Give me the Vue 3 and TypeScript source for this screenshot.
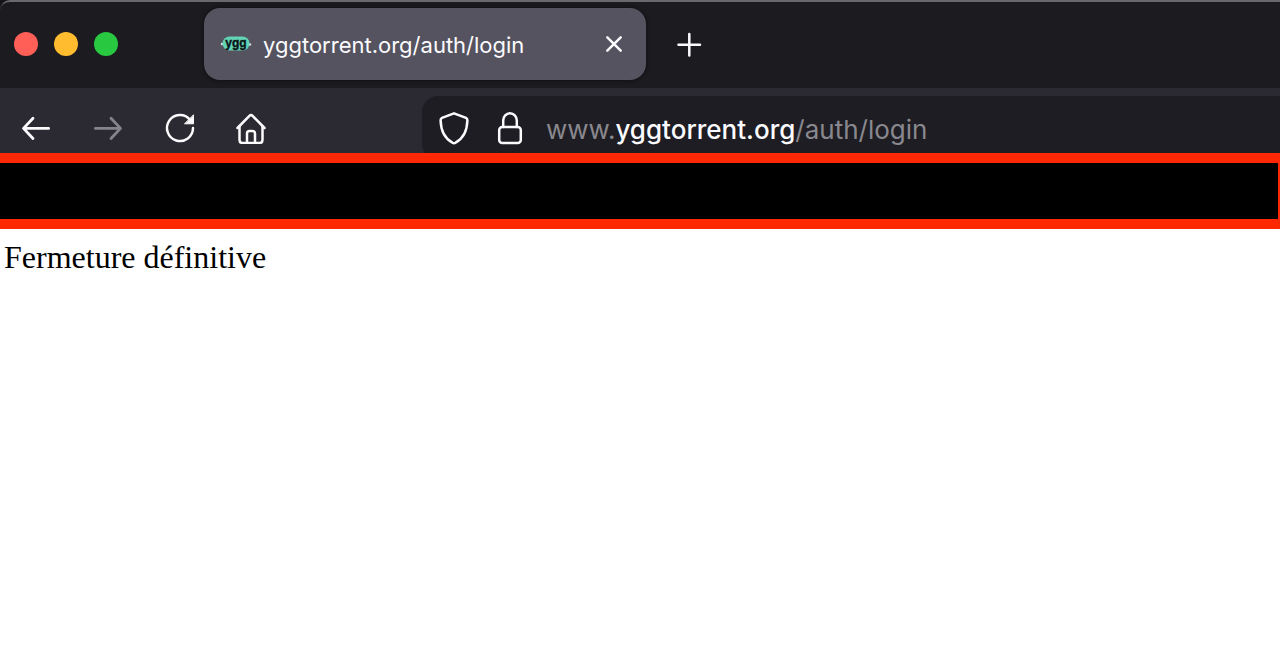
<script setup lang="ts">
import { computed, ref } from 'vue'

const tabTitle = 'yggtorrent.org/auth/login'
const address = ref('www.yggtorrent.org/auth/login')
const editing = ref(false)

const parts = computed(() => {
  const match = address.value.match(/^(www\.)?([^/]*)(.*)$/)
  return { prefix: match?.[1] ?? '', host: match?.[2] ?? '', path: match?.[3] ?? '' }
})
</script>

<template>
  <div class="window">
    <header class="titlebar">
      <div class="lights">
        <button class="light red" aria-label="Fermer la fenêtre"></button>
        <button class="light yellow" aria-label="Réduire"></button>
        <button class="light green" aria-label="Agrandir"></button>
      </div>
      <div class="tab">
        <svg class="favicon" viewBox="0 0 32 20" aria-hidden="true">
          <circle cx="2" cy="10" r="1.2" fill="#d5e2e4" />
          <circle cx="30" cy="10.5" r="1.2" fill="#d5e2e4" />
          <rect x="2.5" y="2.5" width="27" height="14" rx="7" fill="#62d3b6" />
          <text x="16" y="12.5" text-anchor="middle">ygg</text>
        </svg>
        <button class="tab-title">{{ tabTitle }}</button>
        <button class="tab-close" aria-label="Fermer l’onglet">
          <svg width="20" height="20" viewBox="0 0 20 20">
            <path d="M3.300 3.300l13.400 13.400M16.700 3.300L3.300 16.700" />
          </svg>
        </button>
      </div>
      <button class="new-tab" aria-label="Nouvel onglet">
        <svg width="26" height="26" viewBox="0 0 26 26">
          <path d="M13.300 3v21.500M2.500 13.700h21.500" />
        </svg>
      </button>
    </header>

    <nav class="toolbar">
      <div class="actions">
        <button class="action" aria-label="Page précédente">
          <svg class="arrow" width="32" height="32" viewBox="0 0 32 32">
            <path d="M28.600 16.400H3.600M13 6.300L3.500 16.400 13 26.500" />
          </svg>
        </button>
        <button class="action" aria-label="Page suivante" disabled>
          <svg class="arrow" width="32" height="32" viewBox="0 0 32 32">
            <path d="M3.400 16.400h25M19 6.300l9.500 10.100L19 26.500" />
          </svg>
        </button>
        <button class="action" aria-label="Actualiser">
          <svg width="32" height="32" viewBox="0 0 32 32">
            <path d="M29 16A13 13 0 1 1 26 7.700" />
            <path class="solid" d="M29.500 3.200v8.600h-8.600z" />
          </svg>
        </button>
        <button class="action" aria-label="Accueil">
          <svg width="32" height="32" viewBox="0 0 32 32">
            <path d="M1.500 16L13.400 3.900q1.600-1.600 3.200 0L28.500 16" />
            <path d="M3.500 14.500V28q0 3 3 3h17q3 0 3-3V14.500" />
            <path d="M11 31V21.500q0-2.500 2.500-2.500h3q2.500 0 2.500 2.500V31" />
          </svg>
        </button>
      </div>
      <div class="urlbar">
        <button class="info" aria-label="Protection contre le pistage">
          <svg width="32" height="36" viewBox="0 0 32 36">
            <path d="M16 3.300l12 4.600q1.500.7 1.400 2.600C29.100 20 26 28 17.600 32.700q-1.600 1-3.200 0C6 28 2.900 20 2.600 10.500q-.1-1.900 1.400-2.600z" />
          </svg>
        </button>
        <button class="info" aria-label="Informations du site">
          <svg width="32" height="36" viewBox="0 0 32 36">
            <rect x="5.200" y="17" width="21.600" height="16" rx="3" />
            <path d="M9.200 17v-6.500a6.800 7.300 0 0 1 13.600 0V17" />
          </svg>
        </button>
        <div class="address" :class="{ editing }">
          <span class="formatted" aria-hidden="true"><span>{{ parts.prefix }}</span><span class="host">{{ parts.host }}</span><span>{{ parts.path }}</span></span>
          <input
            v-model="address"
            type="text"
            aria-label="Adresse"
            spellcheck="false"
            @focus="editing = true"
            @blur="editing = false"
          />
        </div>
      </div>
    </nav>

    <div class="banner"></div>

    <main class="page">
      <p>Fermeture définitive</p>
    </main>
  </div>
</template>

<style>
body {
  background: #fff;
}
</style>

<style scoped>
* {
  box-sizing: border-box;
}

.window {
  display: flex;
  flex-direction: column;
  min-height: 100vh;
  background: #131318;
  font-family: Inter, "Liberation Sans", sans-serif;
}

button {
  display: flex;
  align-items: center;
  justify-content: center;
  flex: none;
  padding: 0;
  border: 0;
  background: none;
  color: #fbfbfe;
  font: inherit;
}

svg {
  display: block;
  flex: none;
}

button svg {
  fill: none;
  stroke: currentColor;
  stroke-width: 2.5;
  stroke-linecap: round;
  stroke-linejoin: round;
}

button .arrow {
  stroke-width: 2.8;
}

.solid {
  fill: currentColor;
  stroke-width: 1;
}

.titlebar {
  display: flex;
  align-items: center;
  height: 88px;
  padding: 0 0 2px 14px;
  border-top: 2px solid #68686d;
  border-top-left-radius: 10px;
  background: #1c1b20;
}

.lights {
  display: flex;
  gap: 16px;
  margin-right: 86px;
}

.light {
  width: 24px;
  height: 24px;
  border-radius: 50%;
}

.red {
  background: #ff5f57;
}

.yellow {
  background: #febc2e;
}

.green {
  background: #28c840;
}

.tab {
  display: flex;
  align-items: center;
  width: 442px;
  height: 72px;
  padding: 0 16px;
  border-radius: 16px;
  background: #55535f;
  box-shadow: 0 0 4px #0c0c0f;
}

.favicon {
  width: 32px;
  height: 20px;
  margin-right: 11px;
}

.favicon text {
  fill: #0a1518;
  font-family: "Liberation Sans", sans-serif;
  font-size: 12px;
  font-weight: 700;
  stroke: #0a1518;
  stroke-width: 0.4;
}

.tab-title {
  flex: 1;
  justify-content: flex-start;
  padding-top: 2px;
  font-size: 22px;
  line-height: 32px;
}

.tab-close {
  width: 32px;
  height: 32px;
}

.new-tab {
  width: 40px;
  height: 40px;
  margin-left: 23px;
}

.toolbar {
  display: flex;
  align-items: flex-start;
  height: 65px;
  padding-top: 8px;
  overflow: hidden;
  background: #2b2a33;
}

.actions {
  display: flex;
  gap: 32px;
  padding-left: 16px;
  margin-right: 150px;
}

.action {
  width: 40px;
  height: 64px;
}

.action:disabled {
  color: #85848b;
}

.urlbar {
  display: flex;
  flex: 1;
  align-items: center;
  gap: 24px;
  height: 64px;
  padding-left: 16px;
  border-radius: 16px 0 0 16px;
  background: #1e1d23;
}

.info {
  width: 32px;
  height: 40px;
}

.address {
  position: relative;
  flex: 1;
  margin-left: -4px;
  font-size: 26px;
  line-height: 42px;
}

.formatted {
  display: block;
  padding-top: 3px;
  color: #89888e;
  white-space: nowrap;
}

.host {
  color: #fbfbfe;
  font-weight: 500;
}

.address input {
  position: absolute;
  inset: 0;
  width: 100%;
  padding: 3px 0 0;
  border: 0;
  outline: 0;
  background: transparent;
  color: transparent;
  font: inherit;
}

.editing .formatted {
  visibility: hidden;
}

.editing input {
  color: #fbfbfe;
}

.banner {
  height: 76px;
  border: solid #ff2805;
  border-width: 10px 2px 10px 0;
  background: #000;
}

.page {
  flex: 1;
  padding: 9px 4px;
  background: #fff;
  color: #000;
  font-family: "Liberation Serif", "Times New Roman", serif;
  font-size: 32px;
  line-height: 38px;
}

.page p {
  margin: 0;
}
</style>
